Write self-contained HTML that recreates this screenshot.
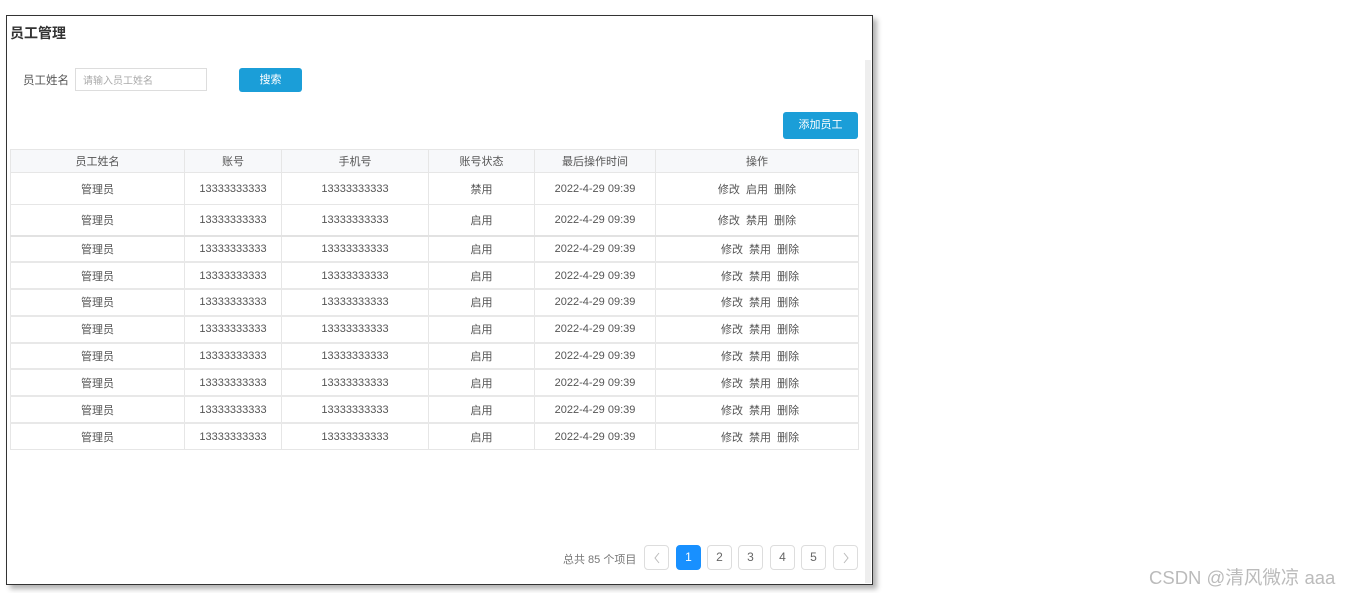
<!DOCTYPE html>
<html><head><meta charset="utf-8"><style>
*{margin:0;padding:0;box-sizing:border-box}
body{width:1354px;height:593px;background:#fff;position:relative;overflow:hidden;font-family:"Liberation Sans","Noto Sans CJK SC",sans-serif;color:#555}
.frame{position:absolute;left:6px;top:15px;width:867px;height:570px;border:1px solid #333;background:#fff;box-shadow:4px 4px 5px rgba(0,0,0,.3)}
.abs{position:absolute}
.sb{left:865px;top:60px;width:6px;height:523px;background:#eee}
.title{left:10px;top:23px;font-size:14px;font-weight:bold;color:#333}
.lbl{left:23px;top:72px;font-size:11.5px;color:#555}
.inp{left:75px;top:68px;width:132px;height:23px;border:1px solid #ddd;font-size:10px;color:#aaa;padding:3px 7px}
.btn{background:#1b9ed8;color:#fff;border-radius:3px;font-size:11px;text-align:center}
table{position:absolute;left:10px;top:149px;border-collapse:collapse;font-size:11px;color:#555}
td{border:1px solid #e6e6e6;text-align:center;padding:0}
tr.h td{background:#f7f8fa;height:23px}
tr.a td{height:32px}
tr.b td{height:31px;border-bottom:2px solid #e2e2e2}
tr.r td{height:26.8px;border-bottom:2px solid #e8e8e8}
.pg{top:545px;width:25px;height:25px;border:1px solid #ddd;border-radius:4px;font-size:12px;text-align:center;line-height:23px;color:#666}
.pg.on{background:#1890ff;border-color:#1890ff;color:#fff}
.pg svg{position:absolute;left:7px;top:6px}
</style></head><body>
<div class="frame"></div>
<div class="abs sb"></div>
<div class="abs title">员工管理</div>
<div class="abs lbl">员工姓名</div>
<div class="abs inp">请输入员工姓名</div>
<div class="abs btn" style="left:239px;top:68px;width:63px;height:24px;line-height:24px">搜索</div>
<div class="abs btn" style="left:783px;top:112px;width:75px;height:27px;line-height:27px">添加员工</div>
<table>
<colgroup><col style="width:174px"><col style="width:97px"><col style="width:147px"><col style="width:106px"><col style="width:121px"><col style="width:203px"></colgroup>
<tr class="h"><td>员工姓名</td><td>账号</td><td>手机号</td><td>账号状态</td><td>最后操作时间</td><td>操作</td></tr>
<tr class="a"><td>管理员</td><td>13333333333</td><td>13333333333</td><td>禁用</td><td>2022-4-29 09:39</td><td>修改&nbsp; 启用&nbsp; 删除</td></tr>
<tr class="b"><td>管理员</td><td>13333333333</td><td>13333333333</td><td>启用</td><td>2022-4-29 09:39</td><td>修改&nbsp; 禁用&nbsp; 删除</td></tr>
<tr class="r"><td>管理员</td><td>13333333333</td><td>13333333333</td><td>启用</td><td>2022-4-29 09:39</td><td>&nbsp;&nbsp;修改&nbsp; 禁用&nbsp; 删除</td></tr>
<tr class="r"><td>管理员</td><td>13333333333</td><td>13333333333</td><td>启用</td><td>2022-4-29 09:39</td><td>&nbsp;&nbsp;修改&nbsp; 禁用&nbsp; 删除</td></tr>
<tr class="r"><td>管理员</td><td>13333333333</td><td>13333333333</td><td>启用</td><td>2022-4-29 09:39</td><td>&nbsp;&nbsp;修改&nbsp; 禁用&nbsp; 删除</td></tr>
<tr class="r"><td>管理员</td><td>13333333333</td><td>13333333333</td><td>启用</td><td>2022-4-29 09:39</td><td>&nbsp;&nbsp;修改&nbsp; 禁用&nbsp; 删除</td></tr>
<tr class="r"><td>管理员</td><td>13333333333</td><td>13333333333</td><td>启用</td><td>2022-4-29 09:39</td><td>&nbsp;&nbsp;修改&nbsp; 禁用&nbsp; 删除</td></tr>
<tr class="r"><td>管理员</td><td>13333333333</td><td>13333333333</td><td>启用</td><td>2022-4-29 09:39</td><td>&nbsp;&nbsp;修改&nbsp; 禁用&nbsp; 删除</td></tr>
<tr class="r"><td>管理员</td><td>13333333333</td><td>13333333333</td><td>启用</td><td>2022-4-29 09:39</td><td>&nbsp;&nbsp;修改&nbsp; 禁用&nbsp; 删除</td></tr>
<tr class="r"><td style="border-bottom:1px solid #e6e6e6">管理员</td><td style="border-bottom:1px solid #e6e6e6">13333333333</td><td style="border-bottom:1px solid #e6e6e6">13333333333</td><td style="border-bottom:1px solid #e6e6e6">启用</td><td style="border-bottom:1px solid #e6e6e6">2022-4-29 09:39</td><td style="border-bottom:1px solid #e6e6e6">&nbsp;&nbsp;修改&nbsp; 禁用&nbsp; 删除</td></tr>
</table>
<div class="abs" style="left:563px;top:551px;font-size:11px;color:#777">总共 85 个项目</div>
<div class="abs pg" style="left:644px"><svg width="10" height="12" viewBox="0 0 10 12"><path d="M7 1 L3 6 L7 11" fill="none" stroke="#bbb" stroke-width="1"/></svg></div>
<div class="abs pg on" style="left:676px">1</div>
<div class="abs pg" style="left:707px">2</div>
<div class="abs pg" style="left:738px">3</div>
<div class="abs pg" style="left:770px">4</div>
<div class="abs pg" style="left:801px">5</div>
<div class="abs pg" style="left:833px"><svg width="10" height="12" viewBox="0 0 10 12"><path d="M3 1 L7 6 L3 11" fill="none" stroke="#bbb" stroke-width="1"/></svg></div>
<div class="abs" style="left:1149px;top:564px;font-size:18.5px;color:#bbb">CSDN @清风微凉 aaa</div>
</body></html>
